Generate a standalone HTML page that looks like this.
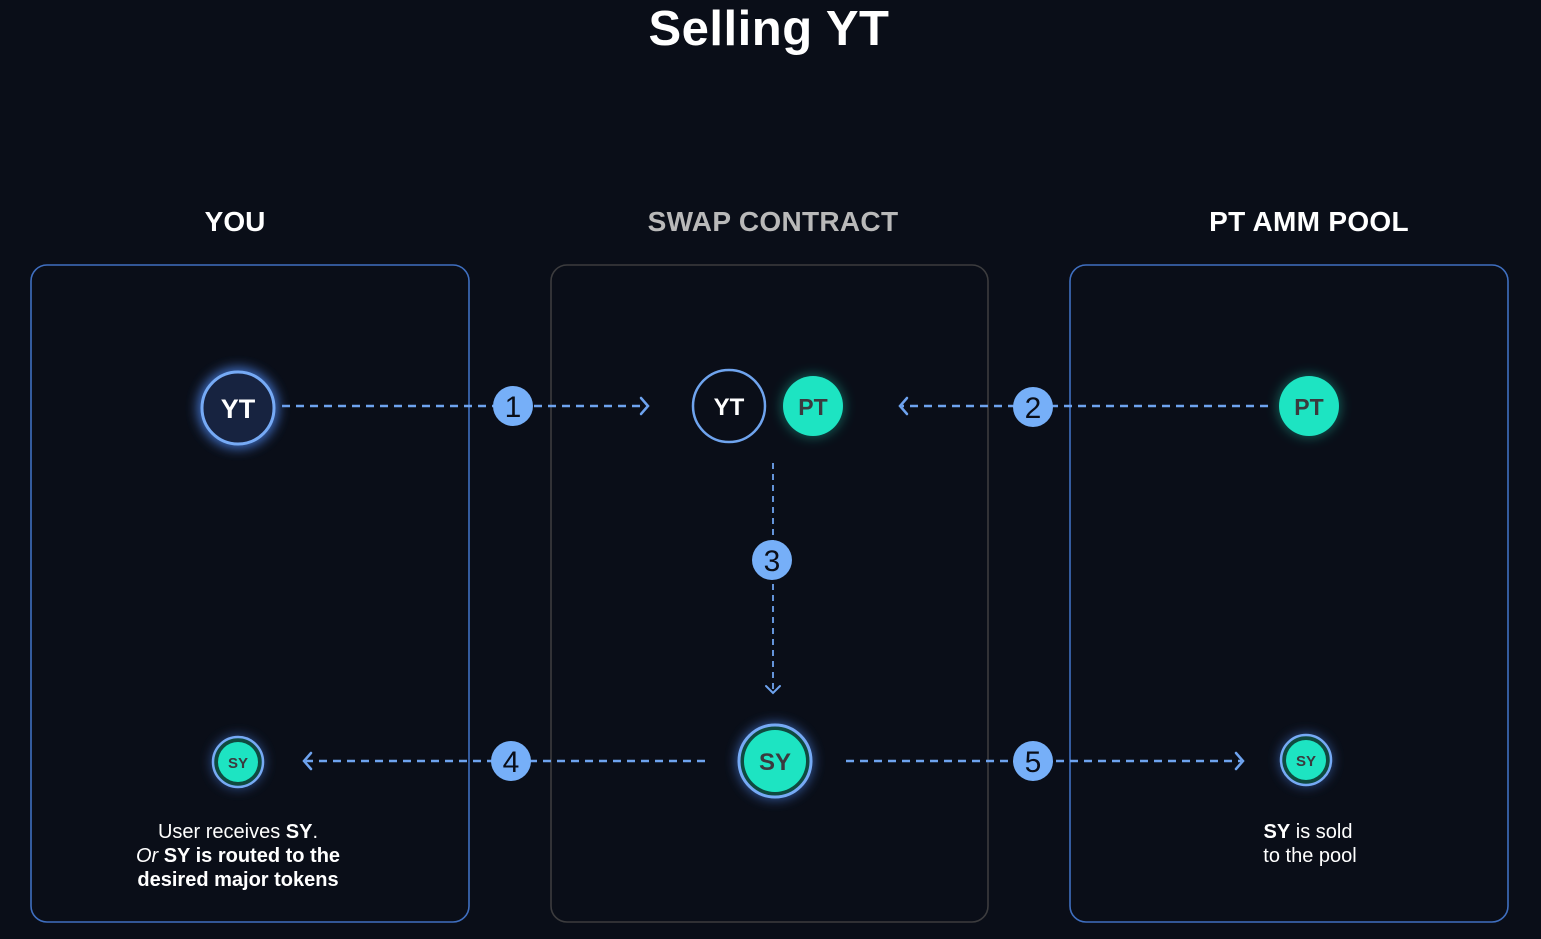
<!DOCTYPE html>
<html><head><style>
html,body{margin:0;padding:0;background:#0a0e18;width:1541px;height:939px;overflow:hidden}
svg{display:block}
text{font-family:"Liberation Sans",sans-serif}
</style></head><body>
<svg width="1541" height="939" viewBox="0 0 1541 939" xmlns="http://www.w3.org/2000/svg">
<defs>
<filter id="glow" x="-60%" y="-60%" width="220%" height="220%"><feGaussianBlur stdDeviation="6"/></filter>
</defs>
<rect width="1541" height="939" fill="#0a0e18"/>
<text x="769" y="45" text-anchor="middle" fill="#fff" font-size="49" font-weight="bold" letter-spacing="0.5">Selling YT</text>
<text x="235" y="231" text-anchor="middle" fill="#fff" font-size="28" font-weight="bold">YOU</text>
<text x="773" y="231" text-anchor="middle" fill="#b9b9b9" font-size="28" font-weight="bold" letter-spacing="0.3">SWAP CONTRACT</text>
<text x="1309" y="231" text-anchor="middle" fill="#fff" font-size="28" font-weight="bold" letter-spacing="0.3">PT AMM POOL</text>

<rect x="31" y="265" width="438" height="657" rx="16" fill="none" stroke="#3f6fc0" stroke-width="1.6"/>
<rect x="551" y="265" width="437" height="657" rx="16" fill="none" stroke="#3c3c3e" stroke-width="1.6"/>
<rect x="1070" y="265" width="438" height="657" rx="16" fill="none" stroke="#3f6fc0" stroke-width="1.6"/>

<g stroke="#6ea3ef" stroke-width="2.5" fill="none" stroke-dasharray="8 6">
<line x1="282" y1="406" x2="646" y2="406"/>
<line x1="1268" y1="406" x2="902" y2="406"/>
<line x1="705" y1="761" x2="306" y2="761"/>
<line x1="846" y1="761" x2="1241" y2="761"/>
<line x1="773" y1="463" x2="773" y2="693" stroke-width="1.8" stroke-dasharray="6 5"/>
</g>
<g stroke="#6ea3ef" stroke-width="2.5" fill="none" stroke-linecap="round">
<polyline points="641,398 648,406 641,414"/>
<polyline points="907,398 900,406 907,414"/>
<polyline points="311,753 304,761 311,769"/>
<polyline points="1236,753 1243,761 1236,769"/>
<polyline points="766,686 773,693 780,686" stroke-width="2"/>
</g>

<circle cx="238" cy="408" r="40" fill="#4a7fe0" filter="url(#glow)" opacity="0.9"/>
<circle cx="238" cy="408" r="36" fill="#172340" stroke="#76aaf5" stroke-width="3"/>
<text x="238" y="418" text-anchor="middle" fill="#fff" font-size="27" font-weight="bold">YT</text>

<circle cx="729" cy="406" r="36" fill="#0a0e18" stroke="#6fa4ee" stroke-width="2.5"/>
<text x="729" y="415" text-anchor="middle" fill="#fff" font-size="24" font-weight="bold">YT</text>
<circle cx="813" cy="406" r="31" fill="#1de4c2" filter="url(#glow)" opacity="0.4"/>
<circle cx="813" cy="406" r="30" fill="#1de4c2"/>
<text x="813" y="415" text-anchor="middle" fill="#3a3a3e" font-size="23" font-weight="bold">PT</text>

<circle cx="1309" cy="406" r="31" fill="#1de4c2" filter="url(#glow)" opacity="0.4"/>
<circle cx="1309" cy="406" r="30" fill="#1de4c2"/>
<text x="1309" y="415" text-anchor="middle" fill="#3a3a3e" font-size="23" font-weight="bold">PT</text>

<circle cx="775" cy="761" r="38" fill="#4a7fe0" filter="url(#glow)" opacity="0.7"/>
<circle cx="775" cy="761" r="36" fill="#0f4a40" stroke="#76aaf5" stroke-width="3"/>
<circle cx="775" cy="761" r="31" fill="#1de4c2"/>
<text x="775" y="770" text-anchor="middle" fill="#3a3a3e" font-size="24" font-weight="bold">SY</text>

<circle cx="238" cy="762" r="26" fill="#4a7fe0" filter="url(#glow)" opacity="0.6"/>
<circle cx="238" cy="762" r="25" fill="#0f4a40" stroke="#76aaf5" stroke-width="2.5"/>
<circle cx="238" cy="762" r="20" fill="#1de4c2"/>
<text x="238" y="768" text-anchor="middle" fill="#3a3a3e" font-size="15" font-weight="bold">SY</text>

<circle cx="1306" cy="760" r="26" fill="#4a7fe0" filter="url(#glow)" opacity="0.6"/>
<circle cx="1306" cy="760" r="25" fill="#0f4a40" stroke="#76aaf5" stroke-width="2.5"/>
<circle cx="1306" cy="760" r="20" fill="#1de4c2"/>
<text x="1306" y="766" text-anchor="middle" fill="#3a3a3e" font-size="15" font-weight="bold">SY</text>

<g fill="#76aff8">
<circle cx="513" cy="406" r="20"/>
<circle cx="1033" cy="407" r="20"/>
<circle cx="772" cy="560" r="20"/>
<circle cx="511" cy="761" r="20"/>
<circle cx="1033" cy="761" r="20"/>
</g>
<g fill="#0a0e18" font-size="30" text-anchor="middle">
<text x="513" y="417">1</text>
<text x="1033" y="418">2</text>
<text x="772" y="571">3</text>
<text x="511" y="772">4</text>
<text x="1033" y="772">5</text>
</g>

<g fill="#fff" font-size="20" text-anchor="middle">
<text x="238" y="838">User receives <tspan font-weight="bold">SY</tspan>.</text>
<text x="238" y="862"><tspan font-style="italic">Or</tspan> <tspan font-weight="bold">SY is routed to the</tspan></text>
<text x="238" y="886" font-weight="bold">desired major tokens</text>
<text x="1308" y="838"><tspan font-weight="bold">SY</tspan> is sold</text>
<text x="1310" y="862">to the pool</text>
</g>
</svg>
</body></html>
